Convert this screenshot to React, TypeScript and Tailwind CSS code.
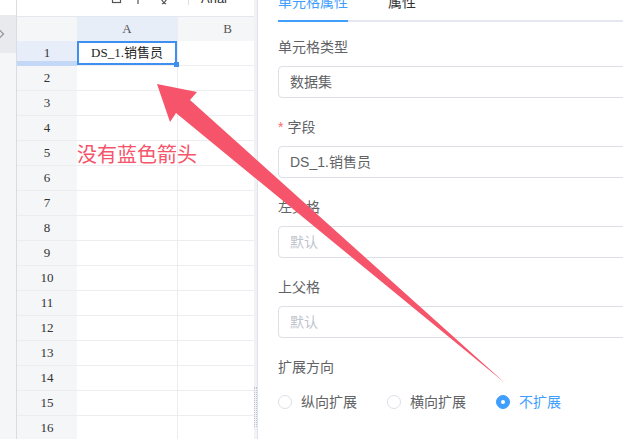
import React from "react"

const rows = Array.from({ length: 16 }, (_, i) => i + 1)

const sheetFont = { fontFamily: '"Liberation Serif", "Noto Sans CJK SC", serif' }
const uiFont = { fontFamily: '"Liberation Sans", "Noto Sans CJK SC", sans-serif' }

function Field({ label, value, placeholder, required }: { label: string; value?: string; placeholder?: string; required?: boolean }) {
  return (
    <div className="mb-[19px]">
      <div className="flex h-[20px] items-center text-[14px] leading-[20px] text-[#606266]">
        {required && <span className="mr-[4px] text-[#f56c6c]">*</span>}
        {label}
      </div>
      <div className="mt-[9px] flex h-[32px] w-[380px] items-center rounded-[4px] border border-[#dcdfe6] pl-[11px] text-[14px]">
        {value ? <span className="text-[#606266]">{value}</span> : <span className="text-[#c0c4cc]">{placeholder}</span>}
      </div>
    </div>
  )
}

function Radio({ label, checked }: { label: string; checked?: boolean }) {
  return (
    <div className="mr-[30px] flex items-center">
      <span
        className={`flex h-[14px] w-[14px] items-center justify-center rounded-full border ${
          checked ? "border-[#409eff] bg-[#409eff]" : "border-[#dcdfe6] bg-white"
        }`}
      >
        {checked && <span className="h-[4px] w-[4px] rounded-full bg-white" />}
      </span>
      <span className={`pl-[9px] text-[14px] ${checked ? "text-[#409eff]" : "text-[#606266]"}`}>{label}</span>
    </div>
  )
}

export default function App() {
  return (
    <div className="relative flex h-[439px] w-[623px] overflow-hidden bg-white">
      {/* Sidebar */}
      <div className="flex w-[17px] shrink-0 flex-col border-r border-[#d9dce3]">
        <div className="h-[15px] bg-white" />
        <div className="flex h-[38px] items-center bg-[#e9eaed]">
          <svg width="6" height="10" viewBox="0 0 6 10" className="-ml-[1px]">
            <path d="M0.5 1 L4.5 5 L0.5 9" fill="none" stroke="#8a8f99" strokeWidth="1.2" />
          </svg>
        </div>
        <div className="flex-1 bg-[#f5f6f8]" />
      </div>

      {/* Sheet */}
      <div className="flex w-[237px] shrink-0 flex-col overflow-hidden" style={sheetFont}>
        <div className="flex h-[17px] shrink-0 items-start border-b border-[#e4e7ed] bg-white">
          <svg width="80" height="16" viewBox="0 0 80 16" className="ml-[91px] shrink-0">
            <rect x="4.5" y="-6" width="8" height="8.5" fill="none" stroke="#555" strokeWidth="1.2" />
            <path d="M30 -4 V4" stroke="#555" strokeWidth="1.2" />
            <path d="M51 -4 L56 3 M61 -4 L56 3 M56 3 L54 4 M56 3 L58 4" stroke="#555" strokeWidth="1.2" fill="none" />
          </svg>
          <div className="mt-0 h-[5px] w-px shrink-0 bg-[#dcdfe6]" />
          <span className="-mt-[9px] ml-[12px] text-[13px] leading-[16px] text-[#303133]" style={uiFont}>
            Arial
          </span>
        </div>

        {/* Column header */}
        <div className="flex h-[24px] shrink-0 bg-[#f5f6f8] text-[13px] text-[#555]">
          <div className="w-[60px] shrink-0" />
          <div className="flex w-[100px] shrink-0 items-center justify-center bg-[#e8eef8]">A</div>
          <div className="flex w-[100px] shrink-0 items-center justify-center border-l border-[#ebedf0]">B</div>
        </div>

        {rows.map((r) => (
          <div key={r} className="flex h-[25px] shrink-0 border-b border-[#ededf0] text-[13px]">
            <div
              className={`relative flex w-[60px] shrink-0 items-center justify-center text-[#333] ${
                r === 1 ? "bg-[#e8eef9]" : "bg-[#f5f6f8]"
              }`}
            >
              {r}
              {r === 1 && <div className="absolute inset-x-0 bottom-[-1px] h-[5px] bg-[#c3d7f6]" />}
            </div>
            <div
              className={`relative flex w-[100px] shrink-0 items-center justify-center ${
                r === 1 ? "border-2 border-[#3f8ff0] text-[#222]" : ""
              }`}
            >
              {r === 1 && "DS_1.销售员"}
              {r === 1 && <div className="absolute bottom-[-4px] right-[-4px] h-[5px] w-[5px] bg-[#3f8ff0]" />}
            </div>
            <div className="w-[100px] shrink-0 border-l border-[#ebedf0]" />
          </div>
        ))}
      </div>

      {/* Splitter */}
      <div className="flex w-[4px] shrink-0 flex-col border-r border-[#dfe3ea] bg-[#f0f2f5]">
        <div className="mt-[387px] h-[40px] w-[3px] border-x border-dotted border-[#c0c4cc]" />
      </div>

      {/* Properties panel */}
      <div className="flex-1 overflow-hidden pl-[20px]" style={uiFont}>
        <div className="-mt-[20px] flex h-[42px] border-b-2 border-[#e4e7ed]">
          <div className="-mb-[2px] h-[42px] border-b-2 border-[#409eff] text-[14px] leading-[45px] text-[#409eff]">
            单元格属性
          </div>
          <div className="-mb-[2px] ml-[40px] h-[42px] border-b-2 border-transparent text-[14px] leading-[45px] text-[#303133]">
            属性
          </div>
        </div>

        <div className="pt-[15px]">
          <Field label="单元格类型" value="数据集" />
          <Field label="字段" value="DS_1.销售员" required />
          <Field label="左父格" placeholder="默认" />
          <Field label="上父格" placeholder="默认" />
          <div className="flex h-[20px] items-center text-[14px] text-[#606266]">扩展方向</div>
          <div className="mt-[15px] flex h-[20px] items-center">
            <Radio label="纵向扩展" />
            <Radio label="横向扩展" />
            <Radio label="不扩展" checked />
          </div>
        </div>
      </div>

      {/* Annotation */}
      <svg className="pointer-events-none absolute inset-0" width="623" height="439" viewBox="0 0 623 439">
        <polygon
          points="157,84 197,92 190,100 505,383 176,113 170,122"
          fill="#f5546a"
        />
      </svg>
      <div className="pointer-events-none absolute left-[77px] top-[141px] text-[20px] leading-[28px] text-[#f5546a]" style={uiFont}>
        没有蓝色箭头
      </div>
    </div>
  )
}
